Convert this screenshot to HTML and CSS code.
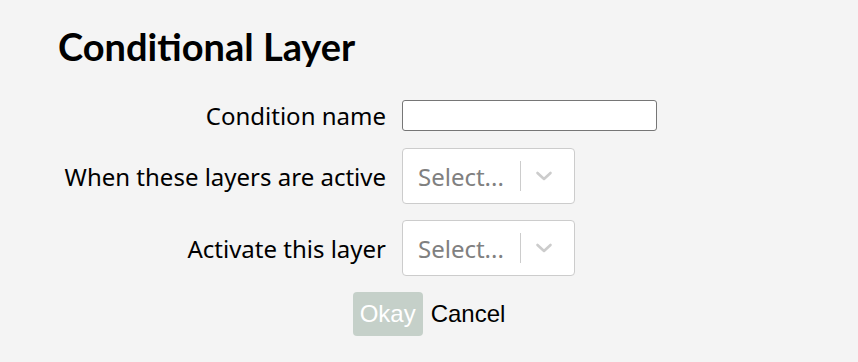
FILE: index.html
```html
<!DOCTYPE html>
<html>
<head>
  <title>Conditional Layer</title>
  <link rel="stylesheet" href="styles.css">
</head>
<body>
  <h1 class="title">Conditional Layer</h1>

  <form class="layer-form">
    <label class="field-label" for="conditionName">Condition name</label>
    <input type="text" id="conditionName" class="text-input">

    <label class="field-label">When these layers are active</label>
    <div class="select">
      <span class="select-placeholder">Select...</span>
      <span class="select-sep"></span>
      <span class="select-arrow">
        <svg width="20" height="20" viewBox="0 0 20 20"><path d="M3.5 7 L10 13 L16.5 7" fill="none" stroke="#cccccc" stroke-width="2.6" stroke-linecap="round" stroke-linejoin="round"/></svg>
      </span>
    </div>

    <label class="field-label">Activate this layer</label>
    <div class="select">
      <span class="select-placeholder">Select...</span>
      <span class="select-sep"></span>
      <span class="select-arrow">
        <svg width="20" height="20" viewBox="0 0 20 20"><path d="M3.5 7 L10 13 L16.5 7" fill="none" stroke="#cccccc" stroke-width="2.6" stroke-linecap="round" stroke-linejoin="round"/></svg>
      </span>
    </div>
  </form>

  <div class="actions">
    <button type="button" class="btn-okay" disabled>Okay</button>
    <button type="button" class="btn-cancel">Cancel</button>
  </div>
</body>
</html>
```

FILE: styles.css
```css
body {
  font-family: "Noto Sans", sans-serif;
  background-color: #f4f4f4;
  color: #000;
  margin: 0;
  padding: 24px 0 0 0;
}

.title {
  font-family: Lato, sans-serif;
  font-weight: 700;
  font-size: 38px;
  margin: 0 0 31px 58px;
  line-height: 44px;
}

.layer-form {
  display: grid;
  grid-template-columns: 325px auto;
  column-gap: 16px;
  row-gap: 16px;
  align-items: center;
  justify-items: start;
  padding-left: 61px;
}

.field-label {
  justify-self: end;
  font-size: 24px;
  white-space: nowrap;
}

.text-input {
  width: 255px;
  height: 31px;
  box-sizing: border-box;
  border: 1px solid #767676;
  border-radius: 3px;
  background: #fff;
  margin: 0;
}

.select {
  display: flex;
  align-items: center;
  width: 173px;
  height: 56px;
  box-sizing: border-box;
  border: 1px solid #cccccc;
  border-radius: 4px;
  background: #fff;
}

.select-placeholder {
  color: #808080;
  font-size: 24px;
  padding-left: 15px;
  width: 102px;
  white-space: nowrap;
}

.select-sep {
  width: 1px;
  height: 30px;
  background: #cccccc;
}

.select-arrow {
  display: flex;
  padding: 0 0 0 13px;
}

.actions {
  display: flex;
  justify-content: center;
  gap: 8px;
  margin-top: 16px;
}

.actions button {
  font-family: "Liberation Sans", Arial, sans-serif;
  font-size: 24px;
  height: 44px;
  border: none;
  border-radius: 4px;
  padding: 0 7px;
}

.actions .btn-okay {
  background-color: #c5d0c9;
  color: #fff;
}

.actions .btn-cancel {
  background: none;
  color: #000;
  padding: 0;
}
```
